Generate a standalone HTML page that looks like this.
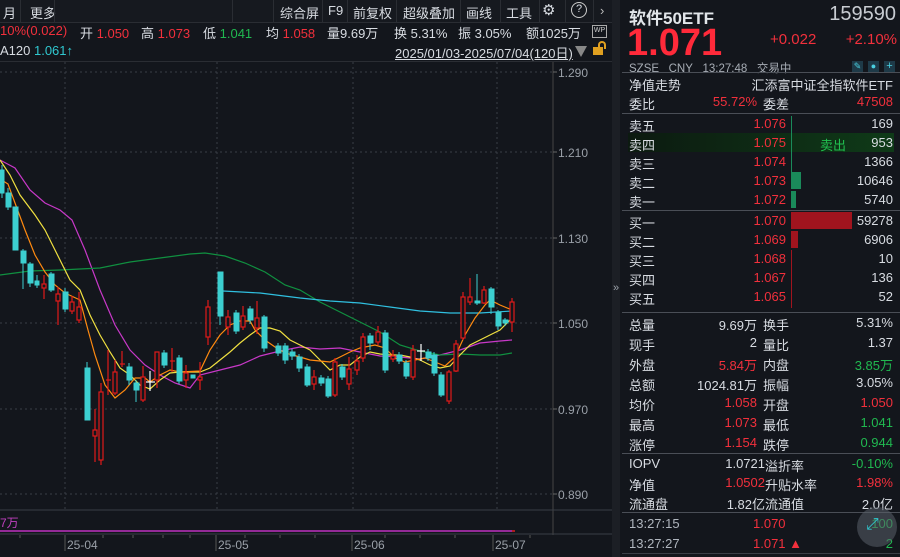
<!DOCTYPE html>
<html><head><meta charset="utf-8"><style>
*{margin:0;padding:0;box-sizing:border-box}
body{width:900px;height:557px;background:#13161c;overflow:hidden;position:relative;font-family:"Liberation Sans","Noto Sans CJK SC",sans-serif;color:#d8dce2;font-size:13px}
.a{position:absolute;white-space:nowrap}
.r{color:#f2303c}.g{color:#20b850}.c{color:#30c8d0}.w{color:#e2e6ea}.gr{color:#9aa0a8}
.tb span{position:absolute;top:3px}
.row{position:absolute;left:629px;width:264px;height:19px;font-size:13px}
.row span{position:absolute;top:1px}
.l1{left:0}.p{right:107px;text-align:right}.p2{right:136px;text-align:right}.v{right:0;text-align:right}
.s2{left:134px}
.hl{position:absolute;background:#4a4e56;height:1px}
</style></head><body>
<div class="a" style="left:0;top:0;width:613px;height:22px;background:#16191f"></div>
<div class="tb">
<span style="left:3px">月</span><span style="left:30px">更多</span>
<span style="left:280px">综合屏</span><span style="left:328px">F9</span><span style="left:353px">前复权</span><span style="left:403px">超级叠加</span><span style="left:466px">画线</span><span style="left:506px">工具</span>
<span style="left:542px;font-size:15px;top:1px">⚙</span>
<span style="left:571px;top:2px;width:16px;height:16px;border:1.5px solid #ccc;border-radius:50%;font-size:11px;text-align:center;line-height:13px">?</span>
<span style="left:600px;color:#bbb">›</span>
</div>
<div class="a" style="left:0;top:22px;width:613px;height:1px;background:#2a2d33"></div>
<div class="a" style="left:20px;top:0;width:1px;height:22px;background:#2a2d33"></div>
<div class="a" style="left:54px;top:0;width:1px;height:22px;background:#2a2d33"></div>
<div class="a" style="left:232px;top:0;width:1px;height:22px;background:#2a2d33"></div>
<div class="a" style="left:273px;top:0;width:1px;height:22px;background:#2a2d33"></div>
<div class="a" style="left:322px;top:0;width:1px;height:22px;background:#2a2d33"></div>
<div class="a" style="left:347px;top:0;width:1px;height:22px;background:#2a2d33"></div>
<div class="a" style="left:396px;top:0;width:1px;height:22px;background:#2a2d33"></div>
<div class="a" style="left:460px;top:0;width:1px;height:22px;background:#2a2d33"></div>
<div class="a" style="left:500px;top:0;width:1px;height:22px;background:#2a2d33"></div>
<div class="a" style="left:539px;top:0;width:1px;height:22px;background:#2a2d33"></div>
<div class="a" style="left:565px;top:0;width:1px;height:22px;background:#2a2d33"></div>
<div class="a" style="left:593px;top:0;width:1px;height:22px;background:#2a2d33"></div>
<div class="a" style="top:23px;left:0;font-size:13px">
<span class="a r" style="left:0">10%(0.022)</span>
<span class="a" style="left:80px">开 <span class="r">1.050</span></span>
<span class="a" style="left:141px">高 <span class="r">1.073</span></span>
<span class="a" style="left:203px">低 <span class="g">1.041</span></span>
<span class="a" style="left:266px">均 <span class="r">1.058</span></span>
<span class="a" style="left:327px">量9.69万</span>
<span class="a" style="left:394px">换 5.31%</span>
<span class="a" style="left:458px">振 3.05%</span>
<span class="a" style="left:526px">额1025万</span>
</div>
<div class="a" style="left:592px;top:25px;width:15px;height:13px;border:1.5px solid #aaa;font-size:7px;text-align:center;line-height:9px;color:#ccc">WP</div>
<div class="a" style="top:43px;left:0;font-size:13px">A120 <span class="c">1.061↑</span></div>
<div class="a" style="top:43px;left:395px;font-size:13px;text-decoration:underline">2025/01/03-2025/07/04(120日)</div>
<div class="a" style="left:575px;top:46px;width:0;height:0;border-left:6px solid transparent;border-right:6px solid transparent;border-top:11px solid #888"></div>
<div class="a" style="left:593px;top:47px;width:10px;height:8px;background:#e0a020"></div>
<div class="a" style="left:598px;top:41px;width:8px;height:8px;border:2px solid #e0a020;border-bottom:none;border-radius:4px 4px 0 0"></div>
<div class="a" style="left:0;top:61px;width:613px;height:1px;background:#2a2d33"></div>
<svg class="a" style="left:0;top:0" width="613" height="557">
<g stroke="#3a3e46" stroke-dasharray="2,3" stroke-width="1">
<line x1="0" y1="72" x2="553" y2="72"/><line x1="0" y1="152" x2="553" y2="152"/><line x1="0" y1="238" x2="553" y2="238"/><line x1="0" y1="323" x2="553" y2="323"/><line x1="0" y1="409" x2="553" y2="409"/><line x1="0" y1="494" x2="553" y2="494"/>
<line x1="65" y1="62" x2="65" y2="510"/><line x1="217" y1="62" x2="217" y2="510"/><line x1="353" y1="62" x2="353" y2="510"/><line x1="497" y1="62" x2="497" y2="510"/>
</g>
<line x1="553" y1="62" x2="553" y2="535" stroke="#444"/>
<g stroke="#666"><line x1="553" y1="72" x2="557" y2="72"/><line x1="553" y1="152" x2="557" y2="152"/><line x1="553" y1="238" x2="557" y2="238"/><line x1="553" y1="323" x2="557" y2="323"/><line x1="553" y1="409" x2="557" y2="409"/><line x1="553" y1="494" x2="557" y2="494"/></g>
<g font-size="12" fill="#9aa0a8" font-family="Liberation Sans"><text x="558" y="77">1.290</text><text x="558" y="157">1.210</text><text x="558" y="243">1.130</text><text x="558" y="328">1.050</text><text x="558" y="414">0.970</text><text x="558" y="499">0.890</text></g>
<g fill="none" stroke-width="1.2">
<polyline stroke="#c838c8" points="0,160 15,168 30,190 45,203 60,210 72,220 85,250 100,290 115,325 130,350 145,365 160,375 175,383 190,388 200,375 220,370 240,365 260,356 280,351 300,347 320,349 340,348 360,352 380,356 400,357 420,359 440,355 460,350 480,343 500,341 512,340"/>
<polyline stroke="#109040" points="0,275 30,271 60,270 100,268 130,262 160,258 190,254 205,253 225,256 245,263 265,272 285,285 300,290 320,302 340,312 360,322 380,332 400,345 420,351 440,355 460,354 480,355 500,355 512,353"/>
<polyline stroke="#30c0e0" points="223,291 260,293 300,298 330,301 360,303 390,307 420,311 450,313 480,313 512,311"/>
<polyline stroke="#f0e040" points="0,160 10,175 20,195 35,215 45,230 55,250 70,280 80,290 90,315 100,335 110,352 120,368 130,375 140,385 150,389 160,380 170,373 180,372 190,372 200,372 210,368 220,360 230,352 240,343 250,335 260,328 270,328 280,331 290,340 300,345 310,350 320,360 330,370 340,365 350,365 360,357 370,352 380,354 390,355 400,355 410,357 420,360 430,365 440,368 450,366 460,355 470,345 480,340 490,335 500,330 510,320 512,318"/>
<polyline stroke="#ff8a10" points="0,179 8,184 15,203 25,230 35,255 45,272 55,285 65,293 80,300 88,330 95,355 105,385 115,398 125,390 135,378 145,378 150,382 160,375 170,370 180,372 200,371 210,350 220,335 230,325 240,321 250,321 255,330 265,340 275,347 285,353 300,357 310,360 330,362 340,357 350,352 360,348 375,345 385,348 395,358 405,362 415,360 425,358 435,362 445,366 455,357 465,335 475,318 485,305 490,300 500,305 512,310"/>
</g>
<g fill="#3ccfd0" stroke="#3ccfd0" stroke-width="1">
<line x1="2" y1="165" x2="2" y2="198"/><rect x="0" y="170" width="4" height="23"/>
<line x1="8" y1="188" x2="8" y2="210"/><rect x="6" y="193" width="5" height="14"/>
<rect x="13" y="207" width="5" height="43"/>
<line x1="23" y1="249" x2="23" y2="289"/><rect x="21" y="251" width="5" height="12"/>
<line x1="30" y1="262" x2="30" y2="287"/><rect x="28" y="264" width="5" height="19"/>
<line x1="37" y1="275" x2="37" y2="288"/><rect x="35" y="281" width="4" height="4"/>
<line x1="51" y1="272" x2="51" y2="292"/><rect x="49" y="274" width="5" height="16"/>
<line x1="65" y1="288" x2="65" y2="312"/><rect x="63" y="292" width="5" height="17"/>
<line x1="87" y1="362" x2="87" y2="420"/><rect x="85" y="368" width="5" height="52"/>
<line x1="129" y1="363" x2="129" y2="385"/><rect x="127" y="367" width="5" height="13"/>
<line x1="136" y1="380" x2="136" y2="402"/><rect x="134" y="383" width="5" height="7"/>
<line x1="164" y1="350" x2="164" y2="368"/><rect x="162" y="353" width="5" height="12"/>
<line x1="179" y1="355" x2="179" y2="384"/><rect x="177" y="358" width="5" height="23"/>
<rect x="191" y="375" width="4" height="3"/>
<line x1="220" y1="272" x2="220" y2="325"/><rect x="218" y="272" width="5" height="44"/>
<line x1="236" y1="310" x2="236" y2="334"/><rect x="234" y="313" width="5" height="18"/>
<line x1="250" y1="306" x2="250" y2="324"/><rect x="248" y="309" width="5" height="11"/>
<line x1="264" y1="315" x2="264" y2="352"/><rect x="262" y="317" width="5" height="31"/>
<line x1="278" y1="343" x2="278" y2="356"/><rect x="276" y="346" width="5" height="7"/>
<line x1="285" y1="343" x2="285" y2="364"/><rect x="283" y="346" width="5" height="14"/>
<line x1="292" y1="349" x2="292" y2="360"/><rect x="290" y="352" width="5" height="4"/>
<line x1="299" y1="354" x2="299" y2="372"/><rect x="297" y="357" width="5" height="11"/>
<line x1="307" y1="364" x2="307" y2="387"/><rect x="305" y="367" width="5" height="18"/>
<line x1="321" y1="375" x2="321" y2="386"/><rect x="319" y="378" width="5" height="5"/>
<line x1="328" y1="376" x2="328" y2="398"/><rect x="326" y="379" width="5" height="17"/>
<line x1="342" y1="364" x2="342" y2="380"/><rect x="340" y="367" width="5" height="10"/>
<line x1="370" y1="333" x2="370" y2="350"/><rect x="368" y="336" width="5" height="7"/>
<line x1="385" y1="330" x2="385" y2="373"/><rect x="383" y="333" width="5" height="37"/>
<line x1="399" y1="352" x2="399" y2="364"/><rect x="397" y="355" width="5" height="6"/>
<line x1="406" y1="360" x2="406" y2="379"/><rect x="404" y="363" width="5" height="13"/>
<line x1="428" y1="349" x2="428" y2="361"/><rect x="426" y="352" width="5" height="6"/>
<line x1="434" y1="352" x2="434" y2="376"/><rect x="432" y="355" width="5" height="18"/>
<line x1="441" y1="372" x2="441" y2="397"/><rect x="439" y="375" width="5" height="20"/>
<line x1="477" y1="274" x2="477" y2="305"/><rect x="475" y="301" width="5" height="2"/>
<line x1="491" y1="287" x2="491" y2="314"/><rect x="489" y="289" width="5" height="18"/>
<line x1="498" y1="310" x2="498" y2="330"/><rect x="496" y="312" width="5" height="14"/>
<line x1="505" y1="318" x2="505" y2="326"/><rect x="503" y="320" width="5" height="3"/>
</g>
<g fill="none" stroke="#e01a1a" stroke-width="1.2">
<line x1="44" y1="275" x2="44" y2="299"/><rect x="42" y="284" width="4" height="4" fill="#13161c"/>
<line x1="58" y1="287" x2="58" y2="325"/><rect x="56" y="294" width="4" height="7" fill="#13161c"/>
<line x1="72" y1="296" x2="72" y2="314"/><rect x="70" y="302" width="4" height="9" fill="#13161c"/>
<line x1="79" y1="292" x2="79" y2="323"/><rect x="77" y="307" width="4" height="13" fill="#13161c"/>
<line x1="95" y1="409" x2="95" y2="462"/><rect x="93" y="430" width="4" height="6" fill="#13161c"/>
<line x1="101" y1="383" x2="101" y2="465"/><rect x="99" y="392" width="4" height="68" fill="#13161c"/>
<line x1="108" y1="350" x2="108" y2="395"/><line x1="106" y1="380" x2="111" y2="380"/>
<line x1="115" y1="360" x2="115" y2="395"/><rect x="113" y="372" width="4" height="21" fill="#13161c"/>
<line x1="122" y1="351" x2="122" y2="367"/><line x1="120" y1="364" x2="125" y2="364"/>
<line x1="143" y1="366" x2="143" y2="402"/><rect x="141" y="377" width="4" height="23" fill="#13161c"/>
<line x1="157" y1="352" x2="157" y2="388"/><rect x="155" y="352" width="4" height="28" fill="#13161c"/>
<line x1="172" y1="348" x2="172" y2="372"/><line x1="170" y1="361" x2="175" y2="361"/>
<line x1="186" y1="365" x2="186" y2="388"/><rect x="184" y="373" width="4" height="7" fill="#13161c"/>
<line x1="200" y1="362" x2="200" y2="390"/><rect x="198" y="377" width="4" height="3" fill="#13161c"/>
<line x1="208" y1="300" x2="208" y2="345"/><rect x="206" y="307" width="4" height="30" fill="#13161c"/>
<line x1="228" y1="310" x2="228" y2="335"/><rect x="226" y="317" width="4" height="10" fill="#13161c"/>
<line x1="243" y1="306" x2="243" y2="330"/><rect x="241" y="316" width="4" height="11" fill="#13161c"/>
<line x1="257" y1="301" x2="257" y2="334"/><rect x="255" y="318" width="4" height="10" fill="#13161c"/>
<line x1="314" y1="370" x2="314" y2="390"/><rect x="312" y="377" width="4" height="7" fill="#13161c"/>
<line x1="335" y1="358" x2="335" y2="397"/><rect x="333" y="362" width="4" height="33" fill="#13161c"/>
<line x1="349" y1="357" x2="349" y2="390"/><rect x="347" y="369" width="4" height="15" fill="#13161c"/>
<line x1="357" y1="355" x2="357" y2="375"/><rect x="355" y="361" width="4" height="9" fill="#13161c"/>
<line x1="363" y1="333" x2="363" y2="362"/><rect x="361" y="337" width="4" height="21" fill="#13161c"/>
<line x1="378" y1="326" x2="378" y2="345"/><rect x="376" y="332" width="4" height="10" fill="#13161c"/>
<line x1="393" y1="350" x2="393" y2="362"/><rect x="391" y="356" width="4" height="3" fill="#13161c"/>
<line x1="413" y1="345" x2="413" y2="380"/><rect x="411" y="350" width="4" height="27" fill="#13161c"/>
<line x1="449" y1="370" x2="449" y2="404"/><rect x="447" y="372" width="4" height="29" fill="#13161c"/>
<line x1="456" y1="340" x2="456" y2="372"/><rect x="454" y="344" width="4" height="27" fill="#13161c"/>
<line x1="463" y1="292" x2="463" y2="340"/><rect x="461" y="297" width="4" height="41" fill="#13161c"/>
<line x1="470" y1="278" x2="470" y2="305"/><rect x="468" y="297" width="4" height="5" fill="#13161c"/>
<line x1="484" y1="286" x2="484" y2="304"/><rect x="482" y="290" width="4" height="13" fill="#13161c"/>
<line x1="512" y1="298" x2="512" y2="332"/><rect x="510" y="302" width="4" height="20" fill="#13161c"/>
</g>
<g stroke="#fff" stroke-width="1.2"><line x1="150" y1="371" x2="150" y2="391"/><line x1="146" y1="382" x2="155" y2="382"/><line x1="421" y1="344" x2="421" y2="361"/><line x1="417" y1="351" x2="425" y2="351"/></g>
<line x1="0" y1="510" x2="613" y2="510" stroke="#3a3e46"/>
<text x="0" y="527" font-size="12" fill="#c040c0" font-family="Liberation Sans,Noto Sans CJK SC">7万</text>
<line x1="0" y1="531" x2="512" y2="531" stroke="#c030c0" stroke-width="1.5"/>
<line x1="512" y1="531" x2="515" y2="531" stroke="#e02020" stroke-width="1.5"/>
<line x1="0" y1="534" x2="613" y2="534" stroke="#3a3e46"/>
<g stroke="#555"><line x1="20" y1="535" x2="20" y2="538"/><line x1="65" y1="535" x2="65" y2="551"/><line x1="103" y1="535" x2="103" y2="538"/><line x1="133" y1="535" x2="133" y2="538"/><line x1="163" y1="535" x2="163" y2="538"/><line x1="190" y1="535" x2="190" y2="538"/><line x1="216" y1="535" x2="216" y2="551"/><line x1="245" y1="535" x2="245" y2="538"/><line x1="280" y1="535" x2="280" y2="538"/><line x1="315" y1="535" x2="315" y2="538"/><line x1="352" y1="535" x2="352" y2="551"/><line x1="385" y1="535" x2="385" y2="538"/><line x1="420" y1="535" x2="420" y2="538"/><line x1="455" y1="535" x2="455" y2="538"/><line x1="493" y1="535" x2="493" y2="551"/><line x1="530" y1="535" x2="530" y2="538"/></g>
<g font-size="12" fill="#9aa0a8" font-family="Liberation Sans"><text x="67" y="549">25-04</text><text x="218" y="549">25-05</text><text x="354" y="549">25-06</text><text x="495" y="549">25-07</text></g>
</svg>
<div class="a" style="left:612px;top:0;width:8px;height:557px;background:#1c1f25"></div>
<div class="a gr" style="left:613px;top:282px;font-size:11px">»</div>
<div class="a w" style="left:629px;top:4px;font-size:17px;font-weight:bold">软件50ETF</div>
<div class="a" style="right:4px;top:3px;font-size:20px;color:#c8ccd2">159590</div>
<div class="a r" style="left:627px;top:22px;font-size:38px;font-weight:bold;color:#ff2a3a">1.071</div>
<div class="a r" style="left:770px;top:31px;font-size:15px">+0.022</div>
<div class="a r" style="right:3px;top:31px;font-size:15px">+2.10%</div>
<div class="a gr" style="left:629px;top:60px;font-size:11.5px;color:#a8aeb6">SZSE&nbsp;&nbsp;&nbsp;CNY&nbsp;&nbsp;&nbsp;13:27:48&nbsp;&nbsp;&nbsp;交易中</div>
<div class="a" style="left:852px;top:61px;width:11px;height:11px;background:#1e3a48;color:#4ad0e0;font-size:9px;text-align:center;line-height:11px">✎</div>
<div class="a" style="left:868px;top:61px;width:11px;height:11px;background:#1e3a48;color:#4ad0e0;font-size:9px;text-align:center;line-height:11px">●</div>
<div class="a" style="left:884px;top:61px;width:11px;height:11px;background:#1e3a48;color:#4ad0e0;font-size:11px;text-align:center;line-height:11px">+</div>
<div class="hl" style="left:622px;top:72px;width:278px"></div>
<div class="row" style="top:74px"><span class="l1">净值走势</span><span class="v">汇添富中证全指软件ETF</span></div>
<div class="row" style="top:93px"><span class="l1">委比</span><span class="p2 r">55.72%</span><span class="s2">委差</span><span class="v r">47508</span></div>
<div class="hl" style="left:622px;top:113px;width:278px"></div>
<div class="a" style="left:628px;top:133px;width:266px;height:19px;background:linear-gradient(90deg,#0c1a10,#0f3a18)"></div>
<div class="a" style="left:791px;top:116px;width:1px;height:59px;background:#1a8a5a"></div>
<div class="a" style="left:791px;top:172px;width:10px;height:17px;background:#1a8a5a"></div>
<div class="a" style="left:791px;top:191px;width:5px;height:17px;background:#1a8a5a"></div>
<div class="row" style="top:115px"><span class="l1">卖五</span><span class="p r">1.076</span><span class="v">169</span></div>
<div class="row" style="top:134px"><span class="l1">卖四</span><span class="p r">1.075</span><span style="left:191px;color:#20c050">卖出</span><span class="v">953</span></div>
<div class="row" style="top:153px"><span class="l1">卖三</span><span class="p r">1.074</span><span class="v">1366</span></div>
<div class="row" style="top:172px"><span class="l1">卖二</span><span class="p r">1.073</span><span class="v">10646</span></div>
<div class="row" style="top:191px"><span class="l1">卖一</span><span class="p r">1.072</span><span class="v">5740</span></div>
<div class="hl" style="left:622px;top:210px;width:278px"></div>
<div class="a" style="left:791px;top:212px;width:61px;height:17px;background:#a0141e"></div>
<div class="a" style="left:791px;top:231px;width:7px;height:17px;background:#a0141e"></div>
<div class="a" style="left:791px;top:250px;width:1px;height:58px;background:#a0141e"></div>
<div class="row" style="top:212px"><span class="l1">买一</span><span class="p r">1.070</span><span class="v">59278</span></div>
<div class="row" style="top:231px"><span class="l1">买二</span><span class="p r">1.069</span><span class="v">6906</span></div>
<div class="row" style="top:250px"><span class="l1">买三</span><span class="p r">1.068</span><span class="v">10</span></div>
<div class="row" style="top:269px"><span class="l1">买四</span><span class="p r">1.067</span><span class="v">136</span></div>
<div class="row" style="top:288px"><span class="l1">买五</span><span class="p r">1.065</span><span class="v">52</span></div>
<div class="hl" style="left:622px;top:312px;width:278px"></div>
<div class="row" style="top:314px"><span class="l1">总量</span><span class="p2">9.69万</span><span class="s2">换手</span><span class="v">5.31%</span></div>
<div class="row" style="top:334px"><span class="l1">现手</span><span class="p2">2</span><span class="s2">量比</span><span class="v">1.37</span></div>
<div class="row" style="top:354px"><span class="l1">外盘</span><span class="p2 r">5.84万</span><span class="s2">内盘</span><span class="v g">3.85万</span></div>
<div class="row" style="top:374px"><span class="l1">总额</span><span class="p2">1024.81万</span><span class="s2">振幅</span><span class="v">3.05%</span></div>
<div class="row" style="top:394px"><span class="l1">均价</span><span class="p2 r">1.058</span><span class="s2">开盘</span><span class="v r">1.050</span></div>
<div class="row" style="top:414px"><span class="l1">最高</span><span class="p2 r">1.073</span><span class="s2">最低</span><span class="v g">1.041</span></div>
<div class="row" style="top:434px"><span class="l1">涨停</span><span class="p2 r">1.154</span><span class="s2">跌停</span><span class="v g">0.944</span></div>
<div class="hl" style="left:622px;top:453px;width:278px"></div>
<div class="row" style="top:455px"><span class="l1">IOPV</span><span class="p2" style="right:128px">1.0721</span><span class="s2" style="left:136px">溢折率</span><span class="v g">-0.10%</span></div>
<div class="row" style="top:474px"><span class="l1">净值</span><span class="p2 r" style="right:128px">1.0502</span><span class="s2" style="left:136px">升贴水率</span><span class="v r">1.98%</span></div>
<div class="row" style="top:493px"><span class="l1">流通盘</span><span class="p2" style="right:128px">1.82亿</span><span class="s2" style="left:136px">流通值</span><span class="v">2.0亿</span></div>
<div class="hl" style="left:622px;top:512px;width:278px"></div>
<div class="row" style="top:515px"><span class="l1" style="color:#b0b6be">13:27:15</span><span class="r" style="left:124px">1.070</span><span class="v g">100</span></div>
<div class="row" style="top:535px"><span class="l1" style="color:#b0b6be">13:27:27</span><span class="r" style="left:124px">1.071 ▲</span><span class="v g">2</span></div>
<div class="a" style="left:857px;top:507px;width:40px;height:40px;border-radius:50%;background:rgba(90,96,106,0.55)"></div>
<div class="a c" style="left:866px;top:516px;font-size:16px">⤢</div>
<div class="a" style="left:622px;top:553px;width:278px;height:1px;background:#3a3e46"></div>
</body></html>
